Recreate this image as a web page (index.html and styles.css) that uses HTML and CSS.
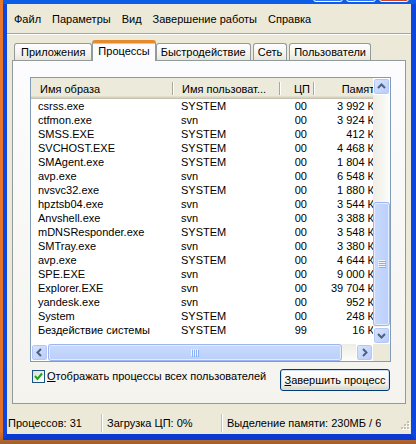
FILE: index.html
```html
<!DOCTYPE html>
<html lang="ru">
  <head>
    <meta charset="UTF-8" />
    <title>Диспетчер задач Windows</title>
    <link rel="stylesheet" href="styles.css">
  </head>
  <body>
    <div class="window">
      <div class="titlebar">
        <span class="tbtn"></span>
        <span class="tbtn"></span>
        <span class="tbtn close"></span>
      </div>
      <div class="frame">
        <ul class="menubar">
          <li>Файл</li>
          <li>Параметры</li>
          <li>Вид</li>
          <li>Завершение работы</li>
          <li>Справка</li>
        </ul>

        <div class="tabs">
          <div class="tab">Приложения</div>
          <div class="tab active">Процессы</div>
          <div class="tab">Быстродействие</div>
          <div class="tab">Сеть</div>
          <div class="tab">Пользователи</div>
        </div>

        <div class="panel">
          <div class="listview">
            <div class="lv-body">
              <div class="lv-view">
                <table class="proc">
                  <thead>
                    <tr>
                      <th class="c-name">Имя образа</th>
                      <th class="c-user">Имя пользоват...</th>
                      <th class="c-cpu">ЦП</th>
                      <th class="c-mem">Память</th>
                    </tr>
                  </thead>
                  <tbody>
                    <tr><td>csrss.exe</td><td>SYSTEM</td><td class="num">00</td><td class="num">3&nbsp;992 К</td></tr>
                    <tr><td>ctfmon.exe</td><td>svn</td><td class="num">00</td><td class="num">3&nbsp;924 К</td></tr>
                    <tr><td>SMSS.EXE</td><td>SYSTEM</td><td class="num">00</td><td class="num">412 К</td></tr>
                    <tr><td>SVCHOST.EXE</td><td>SYSTEM</td><td class="num">00</td><td class="num">4&nbsp;468 К</td></tr>
                    <tr><td>SMAgent.exe</td><td>SYSTEM</td><td class="num">00</td><td class="num">1&nbsp;804 К</td></tr>
                    <tr><td>avp.exe</td><td>svn</td><td class="num">00</td><td class="num">6&nbsp;548 К</td></tr>
                    <tr><td>nvsvc32.exe</td><td>SYSTEM</td><td class="num">00</td><td class="num">1&nbsp;880 К</td></tr>
                    <tr><td>hpztsb04.exe</td><td>svn</td><td class="num">00</td><td class="num">3&nbsp;544 К</td></tr>
                    <tr><td>Anvshell.exe</td><td>svn</td><td class="num">00</td><td class="num">3&nbsp;388 К</td></tr>
                    <tr><td>mDNSResponder.exe</td><td>SYSTEM</td><td class="num">00</td><td class="num">3&nbsp;548 К</td></tr>
                    <tr><td>SMTray.exe</td><td>svn</td><td class="num">00</td><td class="num">3&nbsp;380 К</td></tr>
                    <tr><td>avp.exe</td><td>SYSTEM</td><td class="num">00</td><td class="num">4&nbsp;644 К</td></tr>
                    <tr><td>SPE.EXE</td><td>svn</td><td class="num">00</td><td class="num">9&nbsp;000 К</td></tr>
                    <tr><td>Explorer.EXE</td><td>svn</td><td class="num">00</td><td class="num">39&nbsp;704 К</td></tr>
                    <tr><td>yandesk.exe</td><td>svn</td><td class="num">00</td><td class="num">952 К</td></tr>
                    <tr><td>System</td><td>SYSTEM</td><td class="num">00</td><td class="num">248 К</td></tr>
                    <tr><td>Бездействие системы</td><td>SYSTEM</td><td class="num">99</td><td class="num">16 К</td></tr>
                  </tbody>
                </table>
              </div>
              <div class="vscroll">
                <div class="sb-btn">
                  <svg width="15" height="15" viewBox="0 0 15 15"><polyline points="4,9 7.5,5.5 11,9" fill="none" stroke="#4d6185" stroke-width="2"/></svg>
                </div>
                <div class="sb-track">
                  <div class="sb-thumb v-thumb">
                    <svg width="8" height="8" viewBox="0 0 8 8"><path d="M0 0.5H7M0 2.5H7M0 4.5H7M0 6.5H7" stroke="#eef4fe" stroke-width="1"/><path d="M1 1.5H8M1 3.5H8M1 5.5H8M1 7.5H8" stroke="#8cb0f8" stroke-width="1"/></svg>
                  </div>
                </div>
                <div class="sb-btn">
                  <svg width="15" height="15" viewBox="0 0 15 15"><polyline points="4,6 7.5,9.5 11,6" fill="none" stroke="#4d6185" stroke-width="2"/></svg>
                </div>
              </div>
            </div>
            <div class="hbar">
              <div class="hscroll">
                <div class="sb-btn">
                  <svg width="15" height="15" viewBox="0 0 15 15"><polyline points="9,4 5.5,7.5 9,11" fill="none" stroke="#4d6185" stroke-width="2"/></svg>
                </div>
                <div class="sb-track h-track">
                  <div class="sb-thumb h-thumb">
                    <svg width="8" height="8" viewBox="0 0 8 8"><path d="M0.5 0V7M2.5 0V7M4.5 0V7M6.5 0V7" stroke="#eef4fe" stroke-width="1"/><path d="M1.5 1V8M3.5 1V8M5.5 1V8M7.5 1V8" stroke="#8cb0f8" stroke-width="1"/></svg>
                  </div>
                </div>
                <div class="sb-btn">
                  <svg width="15" height="15" viewBox="0 0 15 15"><polyline points="6,4 9.5,7.5 6,11" fill="none" stroke="#4d6185" stroke-width="2"/></svg>
                </div>
              </div>
              <div class="sb-corner"></div>
            </div>
          </div>

          <div class="actions">
            <label class="check">
              <span class="box">
                <svg width="11" height="11" viewBox="0 0 11 11"><polyline points="2,5 4.5,8 9,2.5" fill="none" stroke="#21a121" stroke-width="2"/></svg>
              </span>
              <span><u>О</u>тображать процессы всех пользователей</span>
            </label>
            <button class="btn"><u>З</u>авершить процесс</button>
          </div>
        </div>

        <div class="statusbar">
          <div class="cell c1">Процессов: 31</div>
          <div class="cell c2">Загрузка ЦП: 0%</div>
          <div class="cell c3">Выделение памяти: 230МБ / 6</div>
          <div class="grip">
            <svg width="11" height="11" viewBox="0 0 11 11">
              <g fill="#fff"><rect x="9" y="1" width="2" height="2"/><rect x="6" y="4" width="2" height="2"/><rect x="9" y="4" width="2" height="2"/><rect x="3" y="7" width="2" height="2"/><rect x="6" y="7" width="2" height="2"/><rect x="9" y="7" width="2" height="2"/></g>
              <g fill="#c5c2b2"><rect x="8" y="0" width="2" height="2"/><rect x="5" y="3" width="2" height="2"/><rect x="8" y="3" width="2" height="2"/><rect x="2" y="6" width="2" height="2"/><rect x="5" y="6" width="2" height="2"/><rect x="8" y="6" width="2" height="2"/></g>
            </svg>
          </div>
        </div>
      </div>
    </div>
  </body>
</html>
```

FILE: styles.css
```css
* {
  box-sizing: border-box;
}

body {
  margin: 0;
  width: 416px;
  height: 444px;
  overflow: hidden;
  padding-left: 3px;
  background: linear-gradient(#e8782e 0, #e2722b 97%, #a0602c 100%);
  font-family: "Liberation Sans", Arial, sans-serif;
  font-size: 11px;
  color: #000;
}

.window {
  width: 413px;
}

/* bottom edge of the title bar */
.titlebar {
  height: 4px;
  overflow: hidden;
  display: flex;
  justify-content: flex-end;
  align-items: flex-end;
  gap: 3px;
  padding: 0 7px 2px 0;
  background: #0b5ce6;
}

.tbtn {
  flex: none;
  width: 30px;
  height: 21px;
  border: 1px solid #fff;
  border-radius: 3px;
  background: #2f76f4;
}

.tbtn.close {
  background: #c8462b;
}

.frame {
  height: 436px;
  background: #ece9d8;
  border-left: 4px solid #0c45e0;
  border-right: 5px solid #0c45e0;
  border-bottom: 6px solid #0a3ad2;
  display: flex;
  flex-direction: column;
}

.menubar {
  list-style: none;
  margin: 0;
  padding: 0 0 0 1px;
  height: 30px;
  display: flex;
  align-items: center;
  border-bottom: 1px solid #aca899;
  box-shadow: 0 1px 0 #fff;
}

.menubar li {
  padding: 0 5px 0 6px;
}

/* tabs */
.tabs {
  display: flex;
  align-items: flex-end;
  height: 21px;
  margin: 6px 0 -1px 0;
  padding-left: 7px;
}

.tab {
  height: 17px;
  margin-bottom: 1px;
  margin-right: 2px;
  padding: 0 4px;
  line-height: 16px;
  border: 1px solid #919b9c;
  border-bottom: none;
  border-radius: 3px 3px 0 0;
  background: linear-gradient(#fefefe, #f4f3ee 60%, #e8e6dc);
}

.tab:first-child {
  padding: 0 6px;
}

.tab.active {
  position: relative;
  z-index: 1;
  height: 21px;
  margin: 0 0 0 -2px;
  padding: 0 5px;
  line-height: 17px;
  border-top: 3px solid #e68b2c;
  box-shadow: inset 0 1px 0 #ffc73c;
  background: #fcfcfe;
}

.panel {
  margin: 0 5px 0 5px;
  padding: 16px 14px 12px 17px;
  border: 1px solid #919b9c;
  background: linear-gradient(#fcfcfe, #f4f3ee);
}

/* process list */
.listview {
  width: 361px;
  height: 285px;
  border: 1px solid #7f9db9;
  background: #fff;
}

.lv-body {
  display: flex;
  height: 266px;
}

.lv-view {
  width: 342px;
  overflow: hidden;
}

.proc {
  width: 350px;
  table-layout: fixed;
  border-collapse: collapse;
}

.proc th {
  height: 21px;
  padding: 0 0 0 9px;
  font-weight: normal;
  text-align: left;
  white-space: nowrap;
  overflow: hidden;
  background:
    linear-gradient(#fff, #fff) right 4px / 1px 13px no-repeat,
    linear-gradient(#aca899, #aca899) right 1px top 4px / 1px 13px no-repeat,
    #ebeadb;
  box-shadow: inset 0 -1px #c5c2b2, inset 0 -2px #d6d2c2, inset 0 -3px #e2decd;
}

.proc .c-name { width: 143px; }
.proc .c-user { width: 107px; padding-left: 8px; }
.proc .c-cpu { width: 34px; text-align: right; padding: 0 5px 0 0; }
.proc .c-mem { width: 66px; text-align: right; padding: 0 1px 0 0; }

.proc td {
  height: 14px;
  line-height: 13px;
  padding: 1px 0 0 7px;
  white-space: nowrap;
  overflow: hidden;
}

.proc td.num {
  text-align: right;
  padding: 1px 7px 0 0;
}

.proc td:nth-child(3) {
  padding-right: 8px;
}

/* scrollbars */
.vscroll {
  width: 17px;
  display: flex;
  flex-direction: column;
}

.sb-btn {
  flex: none;
  width: 17px;
  height: 17px;
  display: flex;
  align-items: center;
  justify-content: center;
  border: 1px solid #fff;
  border-radius: 3px;
  background: linear-gradient(135deg, #dbe6fe, #b7cbf9);
  box-shadow: inset 0 0 0 1px #b3c8f5;
}

.sb-track {
  flex: 1;
  display: flex;
  flex-direction: column;
  justify-content: flex-end;
  padding-bottom: 1px;
  background: linear-gradient(90deg, #eeede5, #fdfdfa);
}

.sb-thumb {
  display: flex;
  align-items: center;
  justify-content: center;
  border: 1px solid #9db6f3;
  border-radius: 3px;
  background: linear-gradient(90deg, #c9dafd, #bacffb);
  box-shadow: inset 0 0 0 1px #e4ecfe;
}

.v-thumb {
  height: 124px;
}

.hbar {
  display: flex;
  height: 17px;
}

.hscroll {
  width: 342px;
  display: flex;
}

.h-track {
  flex-direction: row;
  justify-content: flex-start;
  padding: 0;
  background: linear-gradient(#eeede5, #fdfdfa);
}

.h-thumb {
  width: 294px;
  background: linear-gradient(#c9dafd, #bacffb);
}

.sb-corner {
  flex: 1;
  background: #ece9d8;
}

/* checkbox and button */
.actions {
  display: flex;
  justify-content: space-between;
  align-items: flex-start;
  margin-top: 7px;
}

.check {
  display: flex;
  align-items: center;
  gap: 2px;
  margin-left: 2px;
  line-height: 14px;
}

.box {
  width: 13px;
  height: 13px;
  display: flex;
  align-items: center;
  justify-content: center;
  border: 1px solid #1c5180;
  background: linear-gradient(135deg, #dcdcd7, #fff);
}

.btn {
  width: 110px;
  height: 22px;
  margin-right: 1px;
  padding: 0;
  font: inherit;
  color: #000;
  border: 1px solid #003c74;
  border-radius: 3px;
  background: linear-gradient(#fff, #f3f2ec 70%, #d8d3c4);
  box-shadow: inset 0 0 0 1px #cde0f8;
}

/* status bar */
.statusbar {
  flex: 1;
  display: flex;
  align-items: flex-end;
  padding-bottom: 2px;
}

.cell {
  height: 18px;
  line-height: 18px;
  white-space: nowrap;
  overflow: hidden;
}

.c1 {
  width: 94px;
  padding-left: 1px;
}

.c2,
.c3 {
  padding-left: 5px;
  border-left: 1px solid #c5c2b2;
  box-shadow: inset 1px 0 #fff;
}

.c2 {
  width: 120px;
}

.c3 {
  width: 160px;
}

.grip {
  margin-left: auto;
  margin-right: 1px;
  line-height: 0;
}
```
